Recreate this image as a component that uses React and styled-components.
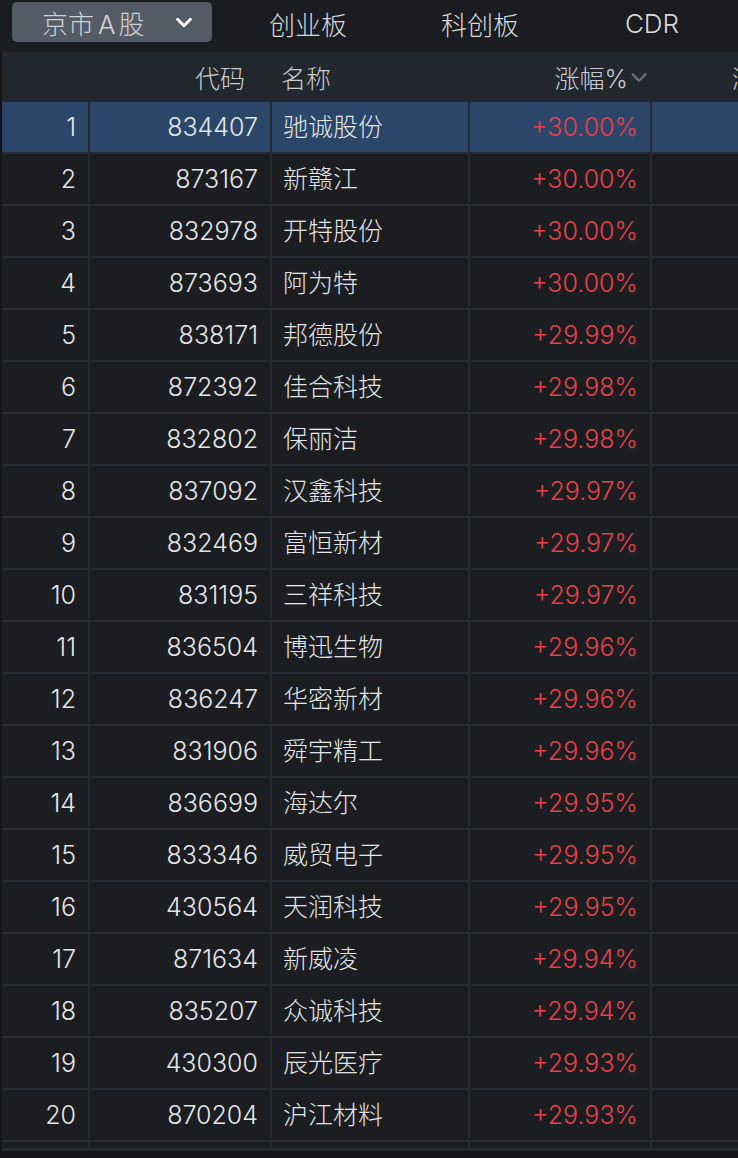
import React from "react";
import styled, { createGlobalStyle } from "styled-components";

const Global = createGlobalStyle`
  html, body { margin: 0; padding: 0; background: #17191c; }
  body { font-family: Inter, "Noto Sans CJK SC", sans-serif; }
  * { box-sizing: border-box; }
`;

const Page = styled.div`
  width: 738px;
  height: 1158px;
  overflow: hidden;
  background: #141518;
  display: flex;
  flex-direction: column;
`;

const TopBar = styled.div`
  height: 52px;
  background: #1a1c20;
  display: flex;
  align-items: flex-start;
  padding: 2px 0 0 12px;
  overflow: hidden;
`;

const Dropdown = styled.div`
  flex-shrink: 0;
  width: 200px;
  height: 40px;
  border-radius: 5px;
  background: #545b66;
  display: flex;
  align-items: center;
  padding: 0 17px 0 30px;
  justify-content: space-between;
  color: #cfd2d7;
  font-size: 26px;
  font-weight: 300;
`;

const Latin = styled.span`
  margin: 0 3px 0 4px;
`;

const Tab = styled.div`
  flex-shrink: 0;
  width: ${(p) => p.$w}px;
  height: 42px;
  display: flex;
  align-items: center;
  justify-content: center;
  color: #d6d8dc;
  font-size: 26px;
  font-weight: 300;
`;

const Table = styled.div`
  display: flex;
  flex-direction: column;
  padding-left: 2px;
  background: #141518;
`;

const cols = "86px 180px 196px 180px 1fr";

const HeaderRow = styled.div`
  display: grid;
  grid-template-columns: ${cols};
  column-gap: 2px;
  height: 50px;
  background: #22262d;
  color: #c9ccd1;
  font-size: 25px;
  font-weight: 300;
`;

const HeadCell = styled.div`
  display: flex;
  align-items: center;
  justify-content: ${(p) => (p.$left ? "flex-start" : "flex-end")};
  padding: ${(p) => (p.$left ? "0 0 0 9px" : p.$pad || "0 25px 0 0")};
  white-space: nowrap;
  overflow: hidden;
`;

const Row = styled.div`
  display: grid;
  grid-template-columns: ${cols};
  column-gap: 2px;
  height: 52px;
  padding-bottom: 2px;
  background: #262a31;
`;

const Cell = styled.div`
  background: ${(p) => (p.$sel ? "#2b4669" : "#1b1d21")};
  display: flex;
  align-items: center;
  justify-content: ${(p) => (p.$left ? "flex-start" : "flex-end")};
  padding: ${(p) => (p.$left ? "0 0 4px 11px" : "0 12px 1px 0")};
  color: ${(p) => (p.$red ? "#e5414a" : "#e4e5e7")};
  font-size: 25px;
  font-weight: 300;
  white-space: nowrap;
  overflow: hidden;
`;

const Tail = styled.div`
  display: grid;
  grid-template-columns: ${cols};
  column-gap: 2px;
  height: 6px;
  background: #262a31;
`;

const TailCell = styled.div`
  background: #1b1d21;
`;

const FootLine = styled.div`
  height: 3px;
  background: #262a31;
`;

const Chevron = ({ color, size, sw }) => (
  <svg width={size} height={size} viewBox="0 0 24 24" fill="none">
    <path d="M5 9 L12 16 L19 9" stroke={color} strokeWidth={sw} strokeLinecap="round" strokeLinejoin="round" />
  </svg>
);

const data = [
  ["834407", "驰诚股份", "+30.00%"],
  ["873167", "新赣江", "+30.00%"],
  ["832978", "开特股份", "+30.00%"],
  ["873693", "阿为特", "+30.00%"],
  ["838171", "邦德股份", "+29.99%"],
  ["872392", "佳合科技", "+29.98%"],
  ["832802", "保丽洁", "+29.98%"],
  ["837092", "汉鑫科技", "+29.97%"],
  ["832469", "富恒新材", "+29.97%"],
  ["831195", "三祥科技", "+29.97%"],
  ["836504", "博迅生物", "+29.96%"],
  ["836247", "华密新材", "+29.96%"],
  ["831906", "舜宇精工", "+29.96%"],
  ["836699", "海达尔", "+29.95%"],
  ["833346", "威贸电子", "+29.95%"],
  ["430564", "天润科技", "+29.95%"],
  ["871634", "新威凌", "+29.94%"],
  ["835207", "众诚科技", "+29.94%"],
  ["430300", "辰光医疗", "+29.93%"],
  ["870204", "沪江材料", "+29.93%"],
];

export default function App() {
  return (
    <Page>
      <Global />
      <TopBar>
        <Dropdown>
          <span>
            京市<Latin>A</Latin>股
          </span>
          <Chevron color="#ffffff" size={22} sw={3.2} />
        </Dropdown>
        <Tab $w={192}>创业板</Tab>
        <Tab $w={152}>科创板</Tab>
        <Tab $w={192}>CDR</Tab>
      </TopBar>
      <Table>
        <HeaderRow>
          <HeadCell />
          <HeadCell>代码</HeadCell>
          <HeadCell $left>名称</HeadCell>
          <HeadCell $pad="0 0 0 0">
            涨幅%
            <Chevron color="#6b7380" size={22} sw={2.4} />
          </HeadCell>
          <HeadCell $left $pad="0">
            <span style={{ marginLeft: 71 }}>涨</span>
          </HeadCell>
        </HeaderRow>
        {data.map((d, i) => (
          <Row key={d[0]}>
            <Cell $sel={i === 0}>{i + 1}</Cell>
            <Cell $sel={i === 0}>{d[0]}</Cell>
            <Cell $sel={i === 0} $left>{d[1]}</Cell>
            <Cell $sel={i === 0} $red>{d[2]}</Cell>
            <Cell $sel={i === 0} />
          </Row>
        ))}
        <Tail>
          <TailCell />
          <TailCell />
          <TailCell />
          <TailCell />
          <TailCell />
        </Tail>
        <FootLine />
      </Table>
    </Page>
  );
}
